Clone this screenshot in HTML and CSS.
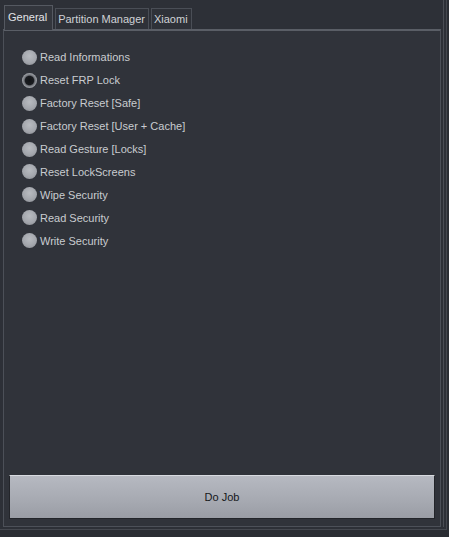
FILE: index.html
```html
<!DOCTYPE html>
<html>
<head>
<meta charset="utf-8">
<link rel="stylesheet" href="styles.css">
</head>
<body>
<div class="frame">
  <div class="inner">
    <div class="tabs">
      <div class="tab active">General</div>
      <div class="tab">Partition Manager</div>
      <div class="tab">Xiaomi</div>
    </div>
    <div class="pane">
      <div class="options">
        <div class="opt"><span class="radio"></span><span class="label">Read Informations</span></div>
        <div class="opt"><span class="radio checked"></span><span class="label">Reset FRP Lock</span></div>
        <div class="opt"><span class="radio"></span><span class="label">Factory Reset [Safe]</span></div>
        <div class="opt"><span class="radio"></span><span class="label">Factory Reset [User + Cache]</span></div>
        <div class="opt"><span class="radio"></span><span class="label">Read Gesture [Locks]</span></div>
        <div class="opt"><span class="radio"></span><span class="label">Reset LockScreens</span></div>
        <div class="opt"><span class="radio"></span><span class="label">Wipe Security</span></div>
        <div class="opt"><span class="radio"></span><span class="label">Read Security</span></div>
        <div class="opt"><span class="radio"></span><span class="label">Write Security</span></div>
      </div>
      <button class="do-job">Do Job</button>
    </div>
  </div>
</div>
</body>
</html>
```
FILE: styles.css
```css
html, body {
  margin: 0;
  padding: 0;
  background: #2a2d33;
  width: 449px;
  height: 537px;
  overflow: hidden;
  font-family: "Liberation Sans", Arial, sans-serif;
}
.frame {
  width: 447px;
  height: 530px;
  border-right: 1px solid #45484f;
  border-bottom: 1px solid #45484f;
  background: #2d3037;
  box-sizing: border-box;
}
.inner {
  width: 444px;
  height: 527px;
  border-right: 1px solid #4a4d54;
  box-sizing: border-box;
  padding-left: 3px;
  display: flex;
  flex-direction: column;
}
.tabs {
  display: flex;
  align-items: flex-end;
  height: 29px;
  padding-left: 1px;
  box-sizing: border-box;
}
.tab {
  height: 21px;
  padding: 0 3px 0 2px;
  margin-left: 2px;
  border: 1px solid #4a4e56;
  border-bottom: none;
  background: #2e3138;
  color: #d0d2d6;
  font-size: 11px;
  line-height: 21px;
  box-sizing: border-box;
}
.tab.active {
  height: 25px;
  margin-left: 0;
  padding: 0 5px 0 3px;
  background: #33363d;
  border-color: #555961;
  color: #e2e4e8;
  line-height: 22px;
  position: relative;
  top: 1px;
}
.pane {
  flex: 1;
  width: 438px;
  border: 1px solid #4c5058;
  border-top: 2px solid #5a5e66;
  background: #30333a;
  box-sizing: border-box;
  display: flex;
  flex-direction: column;
  padding: 15px 6px 7px 5px;
}
.options {
  flex: 1;
  display: flex;
  flex-direction: column;
  padding-left: 13px;
}
.opt {
  height: 22.9px;
  display: flex;
  align-items: center;
}
.radio {
  width: 15px;
  height: 15px;
  border-radius: 50%;
  background: radial-gradient(circle at 50% 40%, #b8bbc0 0%, #a4a7ad 55%, #86898f 100%);
  box-sizing: border-box;
  margin-right: 3px;
  flex: none;
}
.radio.checked {
  background: radial-gradient(circle, #121417 0%, #1a1c20 40%, #6f7278 50%, #a8abb0 72%, #7c7f85 100%);
}
.label {
  color: #c9ccd0;
  font-size: 11px;
}
.do-job {
  height: 44px;
  width: 426px;
  border: 1px solid #23252a;
  border-top-color: #d8dbe0;
  border-radius: 1px;
  background: linear-gradient(#b6b9c1, #a6a9b1 60%, #9a9da5);
  color: #15171a;
  font-family: "Liberation Sans", Arial, sans-serif;
  font-size: 11px;
  padding: 0;
}
```
